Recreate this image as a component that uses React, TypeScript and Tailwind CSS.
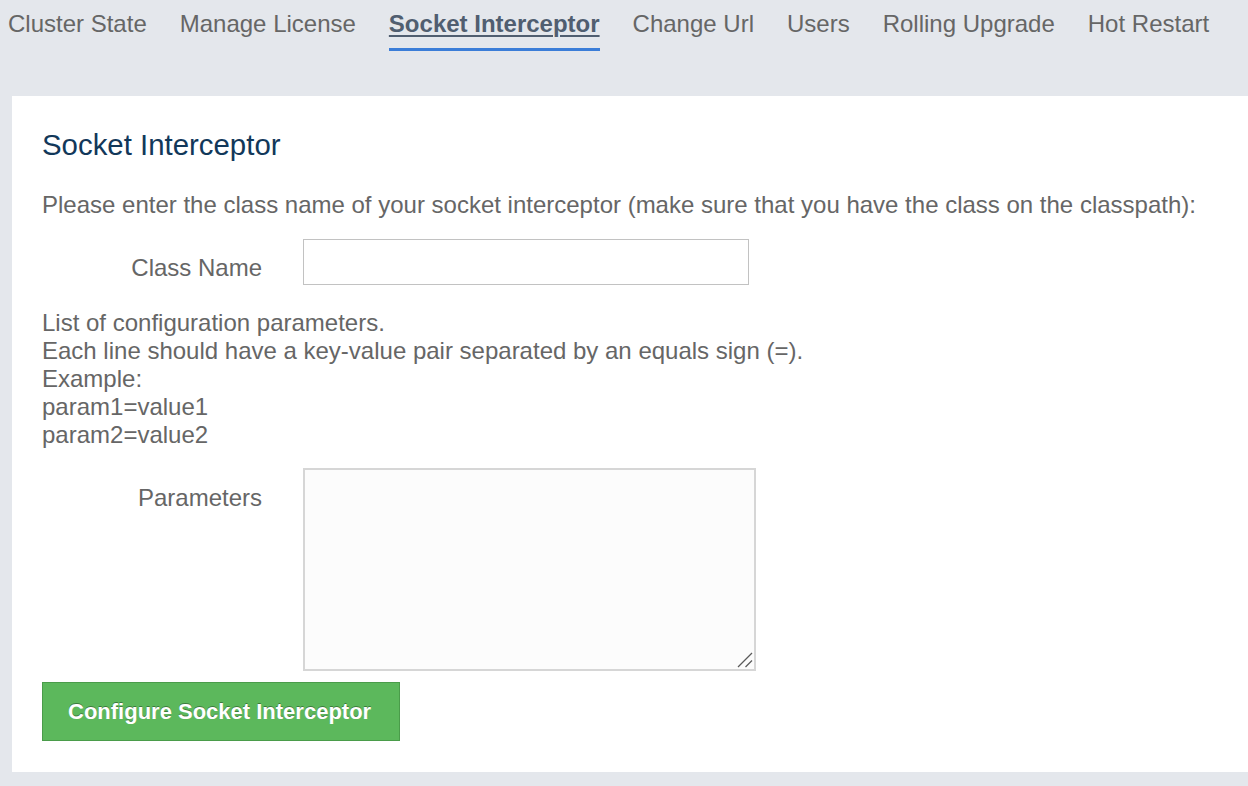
import React from "react";

const tabs = [
  "Cluster State",
  "Manage License",
  "Socket Interceptor",
  "Change Url",
  "Users",
  "Rolling Upgrade",
  "Hot Restart",
];

export default function App() {
  return (
    <div
      className="min-h-[786px] w-[1248px] bg-[#e4e7ec] pb-[14px]"
      style={{ fontFamily: '"Liberation Sans", Arial, Helvetica, sans-serif' }}
    >
      <nav className="flex h-[96px] items-start gap-[33px] pl-[8px]">
        {tabs.map((t) => {
          const active = t === "Socket Interceptor";
          return (
            <div key={t} className="flex flex-col pt-[10px]">
              <span
                className={
                  active
                    ? "text-[24px] leading-[28px] font-bold text-[#505e70] underline decoration-[2px] underline-offset-[3px] whitespace-nowrap"
                    : "text-[24px] leading-[28px] text-[#666666] whitespace-nowrap"
                }
              >
                {t}
              </span>
              {active && <div className="mt-[10px] h-[3px] w-full bg-[#3b7dd8]" />}
            </div>
          );
        })}
      </nav>

      <div className="ml-[12px] flex h-[676px] flex-col bg-white pl-[30px] pt-[32px]">
        <h1 className="text-[29.4px] leading-[34px] text-[#12385a]">Socket Interceptor</h1>
        <p className="mt-[29px] text-[24px] leading-[28px] text-[#666666] whitespace-nowrap">
          Please enter the class name of your socket interceptor (make sure that you have the class on the classpath):
        </p>

        <div className="mt-[20px] flex items-start">
          <label className="w-[220px] pt-[15px] text-right text-[24px] leading-[28px] text-[#666666]">
            Class Name
          </label>
          <input
            type="text"
            className="ml-[41px] h-[46px] w-[446px] border border-[#c2c2c2] bg-white px-2 outline-none"
          />
        </div>

        <div className="mt-[24px] text-[24px] leading-[28px] text-[#666666]">
          <div>List of configuration parameters.</div>
          <div>Each line should have a key-value pair separated by an equals sign (=).</div>
          <div>Example:</div>
          <div>param1=value1</div>
          <div>param2=value2</div>
        </div>

        <div className="mt-[19px] flex items-start">
          <label className="w-[220px] pt-[16px] text-right text-[24px] leading-[28px] text-[#666666]">
            Parameters
          </label>
          <div className="relative ml-[41px] h-[203px] w-[453px]">
            <textarea className="block h-full w-full resize-none border-2 border-[#d6d6d6] bg-[#fcfcfc] outline-none" />
            <svg
              className="pointer-events-none absolute bottom-[3px] right-[3px]"
              width="16"
              height="16"
              viewBox="0 0 16 16"
            >
              <line x1="1" y1="15" x2="15" y2="1" stroke="#5a5a5a" strokeWidth="1.2" />
              <line x1="8.5" y1="15" x2="15" y2="8.5" stroke="#5a5a5a" strokeWidth="1.2" />
            </svg>
          </div>
        </div>

        <div className="mt-[11px]">
          <button className="h-[59px] w-[358px] border border-[#4a9c4a] bg-[#5cb85c] pl-[25px] text-left text-[22px] font-bold text-white [text-shadow:0_-1px_0_rgba(0,0,0,0.35)]">
            Configure Socket Interceptor
          </button>
        </div>
      </div>
    </div>
  );
}
